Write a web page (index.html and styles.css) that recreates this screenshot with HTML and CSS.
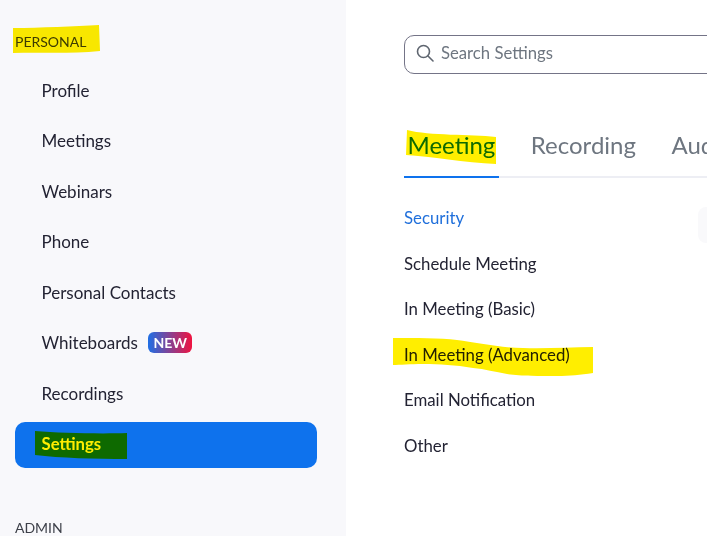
FILE: index.html
```html
<!DOCTYPE html>
<html lang="en">
<head>
    <meta charset="UTF-8">
    <title>Settings</title>
    <link rel="stylesheet" href="styles.css">
</head>
<body>

    <!-- Sidebar -->
    <aside class="sidebar">
        <div class="side-title">PERSONAL</div>
        <nav class="side-nav">
            <a class="side-link" href="#">Profile</a>
            <a class="side-link" href="#">Meetings</a>
            <a class="side-link" href="#">Webinars</a>
            <a class="side-link" href="#">Phone</a>
            <a class="side-link" href="#">Personal Contacts</a>
            <a class="side-link" href="#">Whiteboards <span class="badge">NEW</span></a>
            <a class="side-link" href="#">Recordings</a>
            <a class="side-link active" href="#">Settings</a>
        </nav>
        <div class="side-title admin">ADMIN</div>
    </aside>

    <!-- Main -->
    <main class="content">
        <div class="search">
            <svg class="search-icon" width="18" height="18" viewBox="0 0 18 18" fill="none" stroke="#5f6670" stroke-width="1.6">
                <circle cx="7.5" cy="7.5" r="6"/>
                <path d="M12 12l5 5" stroke-linecap="round"/>
            </svg>
            <span>Search Settings</span>
        </div>

        <div class="tabs">
            <a class="tab active" href="#">Meeting</a>
            <a class="tab" href="#">Recording</a>
            <a class="tab" href="#">Audio Conferencing</a>
        </div>

        <div class="sub-nav">
            <a class="sub-link current" href="#">Security</a>
            <a class="sub-link" href="#">Schedule Meeting</a>
            <a class="sub-link" href="#">In Meeting (Basic)</a>
            <a class="sub-link" href="#">In Meeting (Advanced)</a>
            <a class="sub-link" href="#">Email Notification</a>
            <a class="sub-link" href="#">Other</a>
        </div>
        <div class="side-chip"></div>
    </main>

    <!-- Highlighter marks drawn over the page -->
    <svg class="marks" width="707" height="536" viewBox="0 0 707 536">
        <path fill="#ffee00" d="M13 28 C40 28 75 26 99 25 L100 51 C70 54 40 52 13 53 Z"/>
        <path fill="#ffee00" d="M407 130 C430 136 470 134 496 137 L496 164 C465 163 430 156 406 155 Z"/>
        <path fill="#ffee00" d="M393 338 C415 338 440 338 457 340 C475 342 500 348 523 348 C545 349 570 347 593 347 L593 373 C580 375 570 376 557 376 C540 376 520 376 507 374 C495 372 485 369 473 368 C455 365 440 364 423 364 C410 364 400 365 393 365 Z"/>
        <path fill="#ffee00" d="M35 431 C60 433 100 434 127 433 L127 459 C95 459 60 458 35 455 Z"/>
    </svg>

</body>
</html>
```

FILE: styles.css
```css
html, body {
    height: 100%;
}
body {
    margin: 0;
    display: flex;
    height: 536px;
    overflow: hidden;
    position: relative;
    background-color: #fff;
    font-family: Lato, "Open Sans", sans-serif;
    font-size: 16px;
    color: #232333;
}
a {
    text-decoration: none;
    color: inherit;
}

/* Sidebar */
.sidebar {
    flex: 0 0 346px;
    box-sizing: border-box;
    padding: 33px 29px 0 15px;
    background-color: #f8f8fb;
}
.side-title {
    font-size: 14px;
    line-height: 17px;
    color: #3d4049;
}
.side-nav {
    display: flex;
    flex-direction: column;
    margin-top: 15px;
}
.side-link {
    display: flex;
    align-items: center;
    gap: 10.5px;
    height: 50.5px;
    padding-left: 26.5px;
    font-size: 17px;
}
.side-link.active {
    box-sizing: border-box;
    height: 46px;
    margin-top: 3.4px;
    padding-bottom: 2px;
    border-radius: 10px;
    background-color: #0e72ed;
    color: #fff;
    font-size: 16.7px;
    font-weight: 700;
}
.badge {
    padding: 2px 5px;
    border-radius: 6px;
    background: linear-gradient(90deg, #1f6fe5, #f0133f);
    color: #fff;
    font-size: 14px;
    line-height: 17px;
    font-weight: 700;
}
.admin {
    margin-top: 51px;
}

/* Main */
.content {
    flex: 1;
    min-width: 0;
    padding: 35px 0 0 58px;
    position: relative;
}
.search {
    display: flex;
    align-items: center;
    gap: 7px;
    width: 400px;
    height: 34px;
    padding: 0 0 3px 11px;
    border: 1px solid #747487;
    border-radius: 10px;
    color: #6e7680;
    font-size: 16.7px;
}
.tabs {
    display: flex;
    gap: 28.5px;
    width: 500px;
    margin-top: 38px;
    border-bottom: 2px solid #edeef4;
}
.tab {
    padding: 16px 3.5px 15px;
    margin-bottom: -2px;
    font-size: 24px;
    line-height: 33px;
    white-space: nowrap;
    color: #6e7680;
}
.tab.active {
    color: #0e72ed;
    border-bottom: 2px solid #0e72ed;
}
.sub-nav {
    display: flex;
    flex-direction: column;
    margin-top: 17px;
}
.sub-link {
    height: 45.6px;
    line-height: 45.6px;
    font-size: 16.8px;
}
.sub-link.current {
    color: #1f6fdb;
}
.side-chip {
    position: absolute;
    top: 207px;
    left: 352px;
    width: 30px;
    height: 36px;
    border-radius: 8px;
    background-color: #f9f9fb;
}

/* Highlighter */
.marks {
    position: absolute;
    top: 0;
    left: 0;
    mix-blend-mode: multiply;
    pointer-events: none;
}
```
